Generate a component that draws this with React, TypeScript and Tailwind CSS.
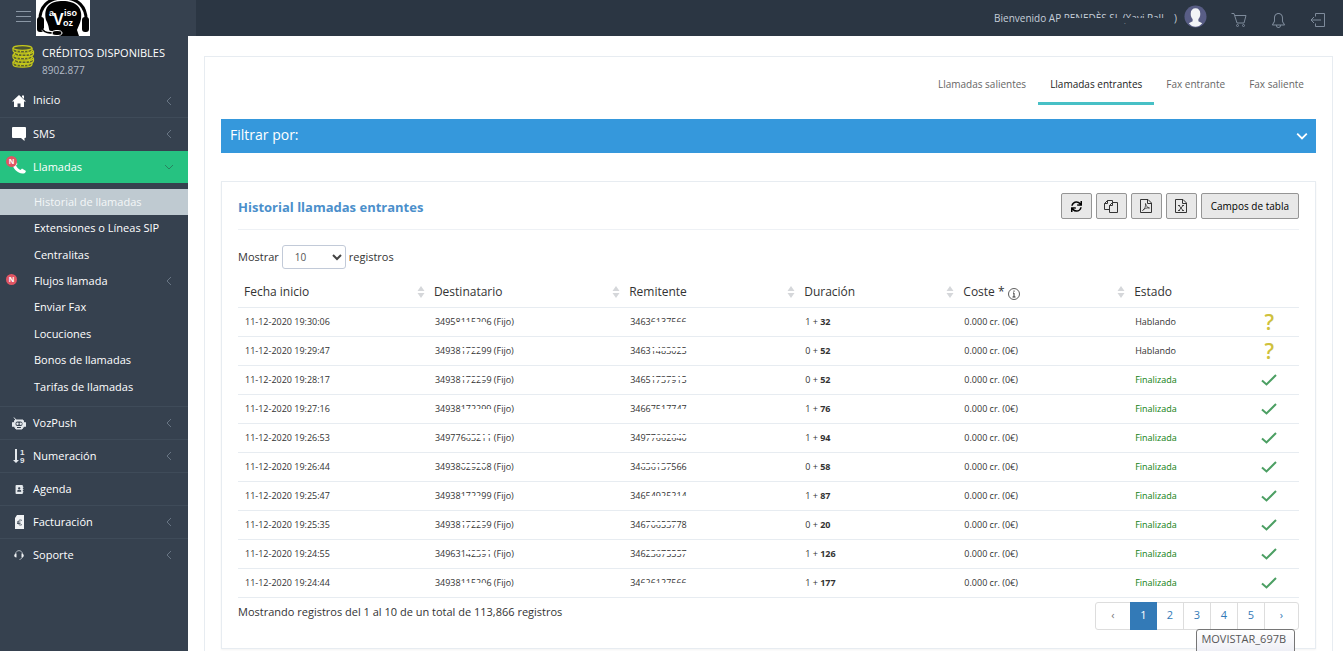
import type { ReactNode } from "react";
import { FaSync, FaAddressBook } from "react-icons/fa";
import { SlBell } from "react-icons/sl";

type Row = {
    date: string;
    to: string[];
    from: string[];
    free: number;
    secs: number;
    done: boolean;
};

const rows: Row[] = [
    { date: "11-12-2020 19:30:06", to: ["3495", "811520", "6 (Fijo)"], from: ["3463", "6137566", ""], free: 1, secs: 32, done: false },
    { date: "11-12-2020 19:29:47", to: ["34938", "1722", "99 (Fijo)"], from: ["3463", "1483025", ""], free: 0, secs: 52, done: false },
    { date: "11-12-2020 19:28:17", to: ["34938", "17229", "9 (Fijo)"], from: ["3465", "1737915", ""], free: 0, secs: 52, done: true },
    { date: "11-12-2020 19:27:16", to: ["34938", "172299", " (Fijo)"], from: ["3466", "7517747", ""], free: 1, secs: 76, done: true },
    { date: "11-12-2020 19:26:53", to: ["349776", "63211", " (Fijo)"], from: ["349", "77662640", ""], free: 1, secs: 94, done: true },
    { date: "11-12-2020 19:26:44", to: ["34938", "02920", "8 (Fijo)"], from: ["34", "636137", "566"], free: 0, secs: 58, done: true },
    { date: "11-12-2020 19:25:47", to: ["34938", "1722", "99 (Fijo)"], from: ["346", "54925214", ""], free: 1, secs: 87, done: true },
    { date: "11-12-2020 19:25:35", to: ["34938", "17229", "9 (Fijo)"], from: ["346", "706537", "78"], free: 0, secs: 20, done: true },
    { date: "11-12-2020 19:24:55", to: ["349631", "42391", " (Fijo)"], from: ["346", "23675557", ""], free: 1, secs: 126, done: true },
    { date: "11-12-2020 19:24:44", to: ["34938", "11520", "6 (Fijo)"], from: ["34", "626127566", ""], free: 1, secs: 177, done: true },
];

const columns = [
    { title: "Fecha inicio", width: "w-[17.9%]", sort: true },
    { title: "Destinatario", width: "w-[18.4%]", sort: true },
    { title: "Remitente", width: "w-[16.5%]", sort: true },
    { title: "Duración", width: "w-[15%]", sort: true },
    { title: "Coste *", width: "w-[16.1%]", sort: true, info: true },
    { title: "Estado", width: "w-[10.5%]" },
];

const submenu = [
    "Historial de llamadas",
    "Extensiones o Líneas SIP",
    "Centralitas",
    "Flujos llamada",
    "Enviar Fax",
    "Locuciones",
    "Bonos de llamadas",
    "Tarifas de llamadas",
];

const tabs = ["Llamadas salientes", "Llamadas entrantes", "Fax entrante", "Fax saliente"];

function Chevron({ className, open }: { className: string; open?: boolean }) {
    return (
        <svg viewBox="0 0 10 10" className={className} fill="none" stroke="currentColor">
            <path d={open ? "M1 3l4 4 4-4" : "M7 1L3 5l4 4"} />
        </svg>
    );
}

function Logo() {
    return (
        <svg viewBox="0 0 54 36" className="h-9 w-[54px] bg-white" role="img" aria-label="Aviso Voz">
            <path d="M4 22C3 7 12-2 27-2s24 9 23 24" fill="none" stroke="#000" strokeWidth="3" />
            <path d="M10 20C7 6 15 1 27 1s20 6 18 18c-1 5-3 8-4 11l2 6H23v-3l-8-1c-3-1-1-5-5-12z" fill="#000" />
            <rect x="1" y="17" width="7" height="15" rx="3" fill="#000" />
            <rect x="46" y="17" width="7" height="15" rx="3" fill="#000" />
            <path d="M7 29c2 3 6 4 12 4" fill="none" stroke="#fff" strokeWidth="4" />
            <path d="M6 29c3 4 7 4 12 4" fill="none" stroke="#000" strokeWidth="1.5" />
            <ellipse cx="21" cy="33" rx="5" ry="2.5" fill="#000" stroke="#fff" />
            <g fill="#fff" fontFamily="Liberation Sans, sans-serif" fontWeight="bold">
                <text x="13" y="16" fontSize="9">a</text>
                <text x="17" y="25" fontSize="16">V</text>
                <text x="28" y="16" fontSize="9">iso</text>
                <text x="27" y="26" fontSize="9">oz</text>
            </g>
        </svg>
    );
}

function Coins() {
    return (
        <svg viewBox="0 0 24 24" className="h-6 w-6 shrink-0" fill="none" stroke="#c5c81c" strokeWidth="1.2">
            {[19, 15.5, 12, 8.5, 5].map((y, i) => (
                <g key={y} transform={`translate(${i % 2 ? 1.5 : 0} 0)`}>
                    <path fill="#5a6030" d={`M2 ${y - 1}v2.5c0 3.6 19 3.6 19 0V${y - 1}`} />
                    <ellipse fill="#4a5232" cx="11.5" cy={y - 1} rx="9.5" ry="2.4" />
                    <path d={`M6 ${y + 1}v2M9.500 ${y + 1.5}v2M13.500 ${y + 1.5}v2M17 ${y + 1}v2`} />
                </g>
            ))}
        </svg>
    );
}

function HomeIcon() {
    return (
        <svg viewBox="0 0 14 14" className="h-[14px] w-[14px]" fill="currentColor">
            <path d="M7 1l7 6.500h-2V13H8.500V9.500h-3V13H2V7.500H0L7 1zM10 1.500h2V5l-2-2z" />
        </svg>
    );
}

function BubbleIcon() {
    return (
        <svg viewBox="0 0 14 14" className="h-[14px] w-[14px]" fill="currentColor">
            <path d="M1 0h12a1 1 0 011 1v9a1 1 0 01-1 1h-.5v3L9 11H1a1 1 0 01-1-1V1a1 1 0 011-1z" />
        </svg>
    );
}

function PhoneIcon() {
    return (
        <svg viewBox="0 0 14 14" className="h-[14px] w-[14px]" fill="currentColor">
            <path d="M1 1l2-1 2.500 4L4 5.500C5 7.500 6.500 9 8.500 10L10 8.500l4 2.500-1 2c-6 3-15-6-12-12z" />
        </svg>
    );
}

function RobotIcon() {
    return (
        <svg viewBox="0 0 14 14" className="h-[14px] w-[14px]">
            <g fill="#e4e8ec">
                <path d="M2 1.500l2 2.500M3 4h8l1 3v3l-2 3H4l-2-3V7z" stroke="#e4e8ec" />
                <rect x="0" y="6" width="2" height="5" rx="1" />
                <rect x="12" y="6" width="2" height="5" rx="1" />
            </g>
            <rect x="3.500" y="5.500" width="7" height="4.500" rx="2" fill="#36414f" />
            <circle cx="5.500" cy="7.700" r="1.200" fill="#e4e8ec" />
            <circle cx="8.700" cy="7.700" r="1.200" fill="#e4e8ec" />
            <path d="M5 11.500h4" stroke="#36414f" />
        </svg>
    );
}

function NumberIcon() {
    return (
        <svg viewBox="0 0 12 16" className="h-4 w-3" fill="#e4e8ec">
            <path d="M2 1h2v11h2l-3 3-3-3h2z" />
            <g fontFamily="Liberation Sans, sans-serif" fontSize="8" fontWeight="bold">
                <text x="7" y="7">1</text>
                <text x="7" y="15">9</text>
            </g>
        </svg>
    );
}

function InvoiceIcon() {
    return (
        <svg viewBox="0 0 10 14" className="h-[14px] w-[10px]">
            <path d="M3 0h7v14H1V3z" fill="#f0f2f4" />
            <path d="M8 5.500C5.500 4 4 6 4 7.500S5.500 11 8 9.500M3 7h3.500M3 8.500h3.500" fill="none" stroke="#36414f" strokeWidth=".8" />
        </svg>
    );
}

function HeadsetIcon() {
    return (
        <svg viewBox="0 0 10 10" className="h-[10px] w-[10px]" fill="none" stroke="#c9d0d7">
            <path d="M1.500 4C2-.5 8-.5 8.500 4M8.500 7c-.5 1.500-1.500 2-3 2.500" strokeWidth=".8" />
            <path d="M2.500 3.500v4C-.5 7.500-.5 3.500 2.500 3.500zM7.500 3.500v4c3 0 3-4 0-4z" fill="#f0f2f4" stroke="none" />
        </svg>
    );
}

function NewBadge({ className }: { className: string }) {
    return (
        <span className={`absolute flex h-[11px] w-[11px] items-center justify-center rounded-full bg-[#e05563] text-[7px] font-bold leading-none text-white ${className}`}>
            N
        </span>
    );
}

type MenuItemProps = { icon: ReactNode; title: string; arrow?: boolean; border?: boolean };

function MenuItem({ icon, title, arrow = true, border = true }: MenuItemProps) {
    return (
        <a href="#" className={`flex h-[33px] items-center pl-3 pr-[14px] text-white ${border ? "border-t border-[#3f4b59]" : ""}`}>
            <span className="flex w-[14px] items-center justify-center">{icon}</span>
            <span className="ml-[7px] flex-1">{title}</span>
            {arrow && <Chevron className="h-[10px] w-[10px] text-[#687584]" />}
        </a>
    );
}

function Sidebar() {
    return (
        <nav className="w-[188px] shrink-0 bg-[#36414f] text-[11px]">
            <div className="flex h-12 gap-[7px] pl-[11px] pt-2 text-white">
                <Coins />
                <div>
                    <div className="leading-[18px]">CRÉDITOS DISPONIBLES</div>
                    <div className="text-[10px] leading-4 text-[#b4bcc8]">8902.877</div>
                </div>
            </div>
            <MenuItem icon={<HomeIcon />} title="Inicio" border={false} />
            <MenuItem icon={<BubbleIcon />} title="SMS" />
            <a href="#" className="relative mt-px flex h-8 items-center bg-[#26c281] pl-3 pr-[14px] text-white">
                <NewBadge className="left-[6px] top-[5px]" />
                <PhoneIcon />
                <span className="ml-[7px] flex-1">Llamadas</span>
                <Chevron open className="h-[10px] w-[10px] text-[#28835f]" />
            </a>
            <ul className="mt-[6px] flex h-[211px] flex-col justify-between">
                {submenu.map((item, i) => (
                    <li key={item}>
                        <a href="#" className={`relative flex h-[26px] items-center pl-[34px] pr-[14px] ${i === 0 ? "bg-[#bfcad1] text-[#f4f7f8]" : "text-white"}`}>
                            {item === "Flujos llamada" && <NewBadge className="left-[6px] top-[6px]" />}
                            <span className="flex-1">{item}</span>
                            {item === "Flujos llamada" && <Chevron className="h-[10px] w-[10px] text-[#687584]" />}
                        </a>
                    </li>
                ))}
            </ul>
            <div className="mt-[6px]">
                <MenuItem icon={<RobotIcon />} title="VozPush" />
                <MenuItem icon={<NumberIcon />} title="Numeración" />
                <MenuItem icon={<FaAddressBook className="h-[9px] w-[9px] text-[#e4e8ec]" />} title="Agenda" arrow={false} />
                <MenuItem icon={<InvoiceIcon />} title="Facturación" />
                <MenuItem icon={<HeadsetIcon />} title="Soporte" />
            </div>
        </nav>
    );
}

function Header() {
    return (
        <header className="flex h-9 shrink-0 items-center bg-[#2b3643] text-[#7e8b9b]">
            <div className="flex h-9 w-[196px] shrink-0 items-center bg-[#36414f] pl-4">
                <button aria-label="Menú" className="mb-1 mr-[5px] flex w-[15px] flex-col gap-1">
                    <span className="h-px w-full bg-[#8b97a5]" />
                    <span className="h-px w-full bg-[#8b97a5]" />
                    <span className="h-px w-full bg-[#8b97a5]" />
                </button>
                <Logo />
            </div>
            <div className="ml-auto flex items-center pr-[17px]">
                <span className="whitespace-pre text-[10px] text-[#c6cfda]">
                    Bienvenido AP{" "}
                    <span className="relative">
                        PENEDÈS SL (Xavi Pall
                        <span className="absolute bottom-[2px] left-0 h-[5px] w-full bg-[#2b3643]" />
                    </span>
                    {"    )"}
                </span>
                <svg viewBox="0 0 24 24" className="mb-1 ml-[7px] h-[23px] w-[23px]">
                    <circle cx="12" cy="12" r="11.500" fill="#585d85" />
                    <path d="M12 3.500c3 0 5 2 5 5.500 0 3-1 4.500-2 5.500v2.500l4 2c-4 5-10 5-14 0l4-2v-2.500C8 13.500 7 12 7 9c0-3.500 2-5.500 5-5.500z" fill="#f1f4f6" />
                </svg>
                <a href="#" aria-label="Carrito" className="ml-[24px] mt-1">
                    <svg viewBox="0 0 16 16" className="h-4 w-4" fill="none" stroke="currentColor">
                        <path d="M.5 1.500h2.500l3 9.500h7l2-7.500H4" />
                        <circle cx="6.500" cy="13.500" r="1" />
                        <circle cx="12.500" cy="13.500" r="1" />
                    </svg>
                </a>
                <a href="#" aria-label="Notificaciones" className="ml-[24px] mt-1">
                    <SlBell className="h-[15px] w-[15px]" />
                </a>
                <a href="#" aria-label="Salir" className="ml-[24px] mt-1">
                    <svg viewBox="0 0 16 16" className="h-4 w-4" fill="none" stroke="currentColor">
                        <path d="M5.500 4.500v-3h9v13h-9v-3M11 8H1M4 5L1 8l3 3" />
                    </svg>
                </a>
            </div>
        </header>
    );
}

function FileIcon({ kind }: { kind: "pdf" | "excel" }) {
    return (
        <svg viewBox="0 0 12 14" className="h-[14px] w-3" fill="none" stroke="#333">
            <path d="M.5 .5h7.500l3.500 3.500v9.500H.5V.5zM7.500 1v3.500h3.500" />
            {kind === "pdf" ? (
                <path strokeWidth=".8" d="M5.500 4.500c1 3 1.500 4 4 4.500-3-.5-5 .5-7 2.500 2-1 3.500-4 3-7z" />
            ) : (
                <path strokeWidth=".9" d="M4 6.500l4 5M8 6.500l-4 5M3 6.500h2M7 6.500h2M3 11.500h2M7 11.500h2" />
            )}
        </svg>
    );
}

function CopyIcon() {
    return (
        <svg viewBox="0 0 14 14" className="h-[14px] w-[14px]" fill="#e8e8e8" stroke="#333">
            <path d="M3.500 1.500h5v9h-8v-6l3-3v3h-3" />
            <path d="M8.500 3.500h5v10h-8v-7l3-3v3h-3" />
        </svg>
    );
}

function ToolButton({ label, children }: { label: string; children: ReactNode }) {
    return (
        <button aria-label={label} className="flex h-[26px] w-[31px] items-center justify-center rounded-[2px] border border-[#959595] bg-[#e8e8e8]">
            {children}
        </button>
    );
}

// number whose middle digits are partly rubbed out
function Masked({ parts, low }: { parts: string[]; low: boolean }) {
    return (
        <>
            {parts[0]}
            <span className="relative">
                {parts[1]}
                <span className={`absolute left-0 h-[3px] w-full bg-white ${low ? "bottom-[3px]" : "top-[4px]"}`} />
            </span>
            {parts[2]}
        </>
    );
}

function SortIcon() {
    return (
        <svg viewBox="0 0 8 12" className="h-3 w-2" fill="#d5d7da">
            <path d="M4 0l3.500 5h-7zM4 12L.5 7h7z" />
        </svg>
    );
}

function CallsTable() {
    return (
        <table className="mt-[7px] w-full table-fixed text-left text-[9px] text-[#333]">
            <thead>
                <tr className="h-[31px] border-b border-[#e7ecf1] text-[12px]">
                    {columns.map((col) => (
                        <th key={col.title} className={`pl-[6px] pr-[3px] pt-[2px] font-medium ${col.width}`}>
                            <div className="flex items-center">
                                {col.title}
                                {col.info && (
                                    <svg viewBox="0 0 12 12" className="ml-[3px] mt-1 h-3 w-3" fill="none" stroke="#333">
                                        <circle cx="6" cy="6" r="5.500" strokeWidth=".8" />
                                        <path d="M6 2.500v1.300M5 5h1v4M4.500 9h3" />
                                    </svg>
                                )}
                                {col.sort && <span className="ml-auto"><SortIcon /></span>}
                            </div>
                        </th>
                    ))}
                    <th aria-label="Resultado" />
                </tr>
            </thead>
            <tbody>
                {rows.map((row, i) => (
                    <tr key={row.date} className="h-[29px] border-b border-[#e7ecf1]">
                        <td className="px-[7px]">{row.date}</td>
                        <td className="px-[7px]"><Masked parts={row.to} low={i % 3 === 0} /></td>
                        <td className="px-[7px]"><Masked parts={row.from} low={i % 3 === 0} /></td>
                        <td className="px-[7px]">{row.free} + <b>{row.secs}</b></td>
                        <td className="px-[7px]">0.000 cr. (0€)</td>
                        <td className={`px-[7px] ${row.done ? "text-[#118011]" : ""}`}>{row.done ? "Finalizada" : "Hablando"}</td>
                        <td>
                            {row.done ? (
                                <svg viewBox="0 0 16 12" className="mx-auto h-3 w-4" fill="none" stroke="#4c9f63" strokeWidth="2">
                                    <path d="M1 6.500l4.500 4L15 1" />
                                </svg>
                            ) : (
                                <span className="block text-center text-[21px] font-semibold leading-5 text-[#cfc13c]">?</span>
                            )}
                        </td>
                    </tr>
                ))}
            </tbody>
        </table>
    );
}

function Pagination() {
    return (
        <nav className="relative mt-1 flex h-7 rounded-[3px] border border-[#ddd] text-[11px] text-[#337ab7]">
            <a href="#" aria-label="Anterior" className="flex w-[34px] items-center justify-center text-[#777]">‹</a>
            {[1, 2, 3, 4, 5].map((n) => (
                <a
                    key={n}
                    href="#"
                    className={`flex w-[27px] items-center justify-center ${n === 1 ? "-my-px bg-[#337ab7] text-white" : "border-r border-[#ddd]"}`}
                >
                    {n}
                </a>
            ))}
            <a href="#" aria-label="Siguiente" className="flex w-[33px] items-center justify-center">›</a>
            <div
                role="tooltip"
                className="absolute right-[3px] top-[26px] whitespace-nowrap rounded-[3px] border border-[#767676] bg-linear-to-b from-white to-[#e4e5f0] px-1 text-[11px] leading-[17px] text-[#575757]"
            >
                MOVISTAR_697B
                <br />
                Acceso a Internet
            </div>
        </nav>
    );
}

export default function App() {
    return (
        <div className="flex h-screen flex-col overflow-hidden bg-white font-['Open_Sans','Noto_Sans',sans-serif] text-[#333]">
            <Header />
            <div className="flex min-h-0 flex-1">
                <Sidebar />
                <main className="min-w-0 flex-1 pl-4 pr-[10px] pt-5">
                    <section className="border border-[#e7ecf1] px-4 pb-5">
                        <div className="flex h-12 justify-end text-[10px] text-[#666]">
                            {tabs.map((tab) => (
                                <a
                                    key={tab}
                                    href="#"
                                    className={`flex items-center border-b-[3px] px-3 pt-[10px] ${tab === "Llamadas entrantes" ? "border-[#47c0c6] text-[#222]" : "border-transparent"}`}
                                >
                                    {tab}
                                </a>
                            ))}
                        </div>
                        <button className="mt-[14px] flex h-[34px] w-full items-center justify-between bg-[#3598dc] pl-[9px] pr-2 text-[14px] text-white">
                            <span className="pb-[3px]">Filtrar por:</span>
                            <Chevron open className="h-3 w-3 stroke-[1.5]" />
                        </button>

                        <div className="mt-7 border border-[#e7ecf1] px-4 pb-[18px] pt-[11px] shadow-xs">
                            <div className="flex items-start justify-between border-b border-[#eef1f5] pb-2">
                                <h1 className="text-[13px] font-bold leading-[28px] text-[#4b8fcb]">Historial llamadas entrantes</h1>
                                <div className="flex gap-1">
                                    <ToolButton label="Actualizar"><FaSync className="h-[11px] w-[11px] text-black" /></ToolButton>
                                    <ToolButton label="Copiar"><CopyIcon /></ToolButton>
                                    <ToolButton label="PDF"><FileIcon kind="pdf" /></ToolButton>
                                    <ToolButton label="Excel"><FileIcon kind="excel" /></ToolButton>
                                    <button className="h-[26px] rounded-[2px] border border-[#959595] bg-[#e8e8e8] px-[9px] text-[10px] text-black">
                                        Campos de tabla
                                    </button>
                                </div>
                            </div>

                            <label className="mt-[15px] flex items-center gap-[3px] text-[11px]">
                                Mostrar
                                <span className="relative flex items-center">
                                    <select defaultValue="10" className="h-6 w-16 appearance-none rounded-[3px] border border-[#c2cad8] bg-white pl-3 text-[10px] text-[#555]">
                                        <option>10</option>
                                        <option>25</option>
                                        <option>50</option>
                                    </select>
                                    <Chevron open className="pointer-events-none absolute right-1 h-[10px] w-[10px] stroke-2 text-[#444]" />
                                </span>
                                registros
                            </label>

                            <CallsTable />

                            <div className="flex items-start justify-between">
                                <p className="mt-[5px] text-[11px] leading-[18px]">
                                    Mostrando registros del 1 al 10 de un total de 113,866 registros
                                </p>
                                <Pagination />
                            </div>
                        </div>
                    </section>
                </main>
            </div>
        </div>
    );
}
